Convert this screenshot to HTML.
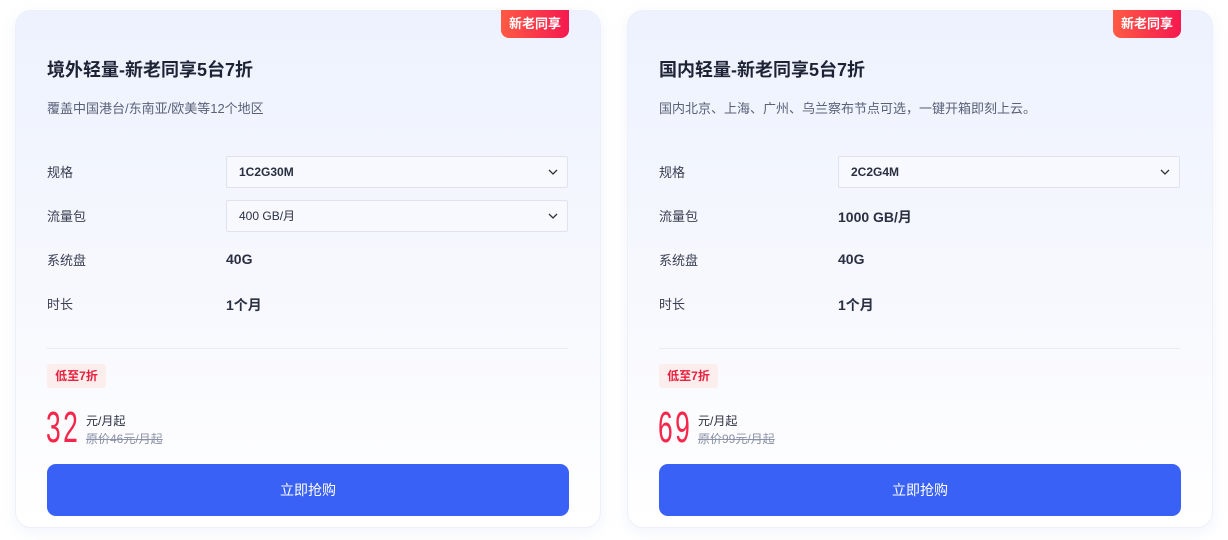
<!DOCTYPE html>
<html><head><meta charset="utf-8"><style>
*{box-sizing:border-box;margin:0;padding:0}
body{width:1228px;height:540px;background:#fff;font-family:"Liberation Sans","Noto Sans CJK SC",sans-serif;position:relative;overflow:hidden}
.card{position:absolute;top:10px;width:586px;height:518px;border-radius:16px;background:linear-gradient(#edf2fe 0%,#f8f9fe 60%,#fff 100%);border:1px solid #eef0f8;box-shadow:0 4px 14px rgba(200,210,240,.25)}
.badge{position:absolute;top:-1px;right:31px;width:68px;height:28px;border-radius:0 0 8px 8px;background:linear-gradient(90deg,#ff5a44,#f5194f);color:#fff;font-size:13px;font-weight:bold;text-align:center;line-height:28px}
.t{position:absolute;left:31px;top:45px;font-size:18px;font-weight:bold;color:#1e2235}
.d{position:absolute;left:31px;top:87px;font-size:13px;color:#5a6078}
.lab{position:absolute;left:31px;font-size:13px;color:#3a3f52}
.val{position:absolute;left:210px;font-size:14px;font-weight:bold;color:#2a2f42}
.sel{position:absolute;left:210px;width:342px;height:32px;border:1px solid #dfe3ee;background:#f7f9ff;border-radius:2px;font-size:12px;font-weight:bold;color:#2a2f42;padding-left:12px;line-height:30px}
.sel svg{position:absolute;right:9px;top:11px}
.hr{position:absolute;left:31px;top:337px;width:521px;height:1px;background:#e8ebf6}
.tag{position:absolute;left:31px;top:353px;width:59px;height:24px;border-radius:3px;background:#fdeeee;color:#e8203e;font-size:12px;font-weight:bold;text-align:center;line-height:24px}
.num{position:absolute;left:30px;top:395px;font-family:"Liberation Sans Narrow","Liberation Sans",sans-serif;font-size:44px;color:#f5264a;transform:scaleX(.6);transform-origin:left;letter-spacing:4px;line-height:44px}
.u{position:absolute;left:70px;top:401px;font-size:12px;color:#2a2f42}
.o{position:absolute;left:70px;top:419px;font-size:12px;color:#8a90a6;text-decoration:line-through}
.btn{position:absolute;left:31px;top:453px;width:522px;height:52px;border-radius:9px;background:#3a61f5;color:#fff;font-size:14px;text-align:center;line-height:52px}
</style></head><body>
<div class="card" style="left:15px">
<div class="badge">新老同享</div>
<div class="t">境外轻量-新老同享5台7折</div>
<div class="d">覆盖中国港台/东南亚/欧美等12个地区</div>
<div class="lab" style="top:151px">规格</div>
<div class="sel" style="top:145px">1C2G30M<svg width="10" height="8"><path d="M1 2l4 4 4-4" stroke="#333" stroke-width="1.3" fill="none"/></svg></div>
<div class="lab" style="top:195px">流量包</div>
<div class="sel" style="top:189px;font-weight:normal">400 GB/月<svg width="10" height="8"><path d="M1 2l4 4 4-4" stroke="#333" stroke-width="1.3" fill="none"/></svg></div>
<div class="lab" style="top:239px">系统盘</div><div class="val" style="top:240px">40G</div>
<div class="lab" style="top:283px">时长</div><div class="val" style="top:284px">1个月</div>
<div class="hr"></div>
<div class="tag">低至7折</div>
<div class="num">32</div>
<div class="u">元/月起</div><div class="o">原价46元/月起</div>
<div class="btn">立即抢购</div>
</div>
<div class="card" style="left:627px">
<div class="badge">新老同享</div>
<div class="t">国内轻量-新老同享5台7折</div>
<div class="d">国内北京、上海、广州、乌兰察布节点可选，一键开箱即刻上云。</div>
<div class="lab" style="top:151px">规格</div>
<div class="sel" style="top:145px">2C2G4M<svg width="10" height="8"><path d="M1 2l4 4 4-4" stroke="#333" stroke-width="1.3" fill="none"/></svg></div>
<div class="lab" style="top:195px">流量包</div><div class="val" style="top:196px">1000 GB/月</div>
<div class="lab" style="top:239px">系统盘</div><div class="val" style="top:240px">40G</div>
<div class="lab" style="top:283px">时长</div><div class="val" style="top:284px">1个月</div>
<div class="hr"></div>
<div class="tag">低至7折</div>
<div class="num">69</div>
<div class="u">元/月起</div><div class="o">原价99元/月起</div>
<div class="btn">立即抢购</div>
</div>
</body></html>
